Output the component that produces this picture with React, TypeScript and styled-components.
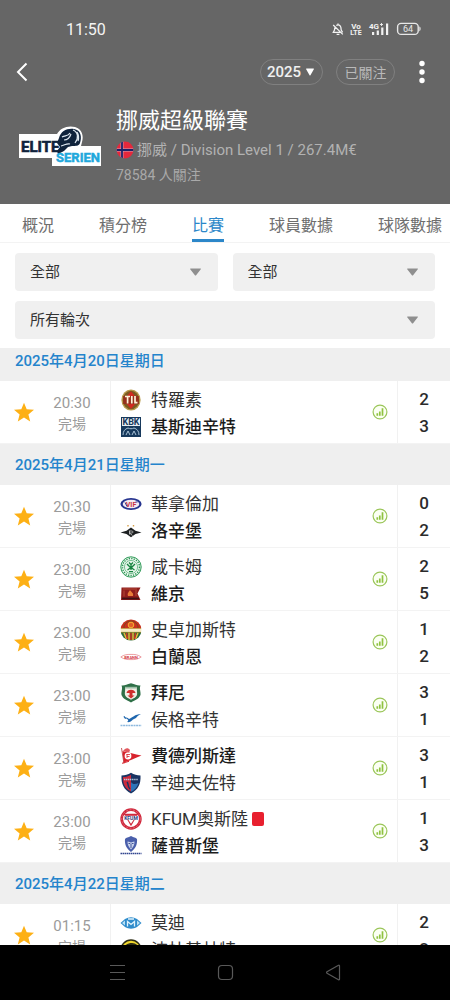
import React, { useState } from "react";
import styled, { createGlobalStyle, css } from "styled-components";

const GlobalStyle = createGlobalStyle`
  *, *::before, *::after { box-sizing: border-box; }
  body {
    margin: 0;
    background: #fff;
    color: #222;
    font-family: Roboto, "Noto Sans CJK TC", sans-serif;
  }
  button, select { font: inherit; color: inherit; }
`;

const Screen = styled.div`
  display: flex;
  flex-direction: column;
  height: 100vh;
  overflow: hidden;
`;

/* ---------- header ---------- */

const Header = styled.header`
  flex: none;
  background: #666;
  color: #fff;
  padding-bottom: 17px;
`;

const StatusBar = styled.div`
  display: flex;
  align-items: center;
  justify-content: space-between;
  height: 58px;
  padding: 0 28px 0 66px;
  font-size: 16px;
  color: #f4f4f4;
`;

const StatusIcons = styled.div`
  display: flex;
  align-items: center;
  gap: 6px;
`;

const Toolbar = styled.div`
  display: flex;
  align-items: center;
  height: 28px;
  padding-right: 6px;
`;

const IconButton = styled.button`
  display: grid;
  place-items: center;
  width: 44px;
  height: 28px;
  padding: 0;
  border: 0;
  background: none;
  color: #fff;
  cursor: pointer;
`;

const Spacer = styled.div`
  flex: 1;
`;

const pill = css`
  height: 26px;
  border: 1px solid #808080;
  border-radius: 13px;
  background: none;
  font-size: 14px;
`;

const Overlay = styled.div`
  display: grid;
  align-items: center;

  > * { grid-area: 1 / 1; }
  > svg { justify-self: end; pointer-events: none; }
`;

const SeasonPicker = styled(Overlay)`
  margin-right: 13px;
  > svg { margin-right: 9px; }
`;

const SeasonSelect = styled.select`
  ${pill}
  appearance: none;
  width: 63px;
  padding: 0 0 0 6px;
  font-size: 15px;
  font-weight: 500;
  color: #f0f0f0;

  option { color: #222; }
`;

const FollowButton = styled.button`
  ${pill}
  width: 59px;
  margin-right: 5px;
  padding: 0;
  color: #b9b9b9;
`;

const League = styled.div`
  display: flex;
  align-items: center;
  gap: 14px;
  padding: 19px 16px 0 18px;
`;

const LeagueTitle = styled.h1`
  margin: 0;
  font-size: 22px;
  font-weight: 400;
  line-height: 32px;
`;

const LeagueMeta = styled.p`
  display: flex;
  align-items: center;
  gap: 3px;
  margin: 0;
  font-size: 15px;
  line-height: 26px;
  color: #b2b2b2;
`;

const Followers = styled.p`
  margin: 0;
  font-size: 14px;
  line-height: 24px;
  color: #a9a9a9;
`;

/* ---------- tabs and filters ---------- */

const Tabs = styled.nav`
  flex: none;
  display: flex;
  gap: 45px;
  height: 39px;
  padding-left: 22px;
  border-bottom: 1px solid #f3f3f3;
  overflow: hidden;
`;

const Tab = styled.button<{ $active: boolean }>`
  flex: none;
  padding: 4px 0 0;
  border: 0;
  border-bottom: 3px solid ${(p) => (p.$active ? "#2c87c9" : "transparent")};
  background: none;
  font-size: 16px;
  color: ${(p) => (p.$active ? "#2c87c9" : "#6e6e6e")};
  white-space: nowrap;
  cursor: pointer;
`;

const Filters = styled.section`
  flex: none;
  position: relative;
  z-index: 1;
  display: grid;
  grid-template-columns: 1fr 1fr;
  gap: 10px 15px;
  padding: 10px 15px 9px;
  background: #fff;
`;

const FilterBox = styled(Overlay)<{ $wide?: boolean }>`
  ${(p) => p.$wide && "grid-column: 1 / -1;"}
  > svg { margin-right: 17px; }
`;

const FilterSelect = styled.select`
  appearance: none;
  width: 100%;
  height: 38px;
  padding: 0 36px 0 15px;
  border: 0;
  border-radius: 4px;
  background: #f0f0f0;
  font-size: 15px;
  color: #333;
`;

/* ---------- matches ---------- */

const MatchList = styled.main`
  flex: 1;
  min-height: 0;
  margin-top: -8px;
  overflow: hidden;
`;

const DayTitle = styled.h2`
  margin: 0;
  padding: 2px 0 0 15px;
  background: #efefef;
  font-size: 15px;
  font-weight: 500;
  line-height: 39px;
  color: #2484cc;
`;

const MatchRow = styled.article`
  display: flex;
  align-items: stretch;
  height: 63px;
  border-bottom: 1px solid #f3f3f3;
`;

const StarButton = styled.button`
  flex: none;
  width: 48px;
  padding: 0;
  border: 0;
  background: none;
  cursor: pointer;

  svg { display: block; margin: 0 auto; }
`;

const Kickoff = styled.div`
  flex: none;
  width: 62px;
  padding: 12px 14px 0 0;
  font-size: 15px;
  line-height: 21px;
  text-align: center;
  color: #9b9b9b;
`;

const State = styled.div`
  font-size: 14px;
`;

const Teams = styled.div`
  flex: 1;
  min-width: 0;
  padding: 5px 0 0 9px;
  border-left: 1px solid #f1f1f1;
`;

const Team = styled.div<{ $winner?: boolean }>`
  display: flex;
  align-items: center;
  height: 27px;
  font-size: 17px;
  line-height: 28px;
  font-weight: ${(p) => (p.$winner ? 500 : 400)};
  color: ${(p) => (p.$winner ? "#1c1c1c" : "#333")};
  white-space: nowrap;

  svg { flex: none; margin-right: 9px; }
`;

const RedCard = styled.span`
  width: 12px;
  height: 14px;
  margin-left: 4px;
  border-radius: 2px;
  background: #e8202f;
`;

const StatsButton = styled.button`
  flex: none;
  width: 34px;
  padding: 0;
  border: 0;
  background: none;
  cursor: pointer;

  svg { display: block; margin: 0 auto; }
`;

const Scores = styled.div`
  flex: none;
  width: 53px;
  padding-top: 5px;
  border-left: 1px solid #f1f1f1;
  font-size: 17px;
  font-weight: 500;
  line-height: 27px;
  text-align: center;
  color: #2b2b2b;
`;

/* ---------- system navigation ---------- */

const SystemBar = styled.footer`
  flex: none;
  display: flex;
  justify-content: center;
  gap: 64px;
  height: 55px;
  background: #000;
  color: #595959;
`;

const SystemButton = styled(IconButton)`
  height: 55px;
  color: inherit;
`;

/* ---------- drawings ---------- */

const Triangle = ({ size = 11, color = "#8f8f8f" }) => (
  <svg width={size} height="8" viewBox="0 0 11 8" preserveAspectRatio="none" aria-hidden="true">
    <path d="M0.6 0.6h9.8c.5 0 .6.4.4.7L6.1 7.2c-.3.4-.9.4-1.2 0L.2 1.3C0 1 .1.6.6.6z" fill={color} />
  </svg>
);

const Star = () => (
  <svg width="22" height="21" viewBox="0 0 22 21" aria-hidden="true">
    <path d="M11 .7l2.700 6.600 7.300.5-5.600 4.600 1.800 7L11 15.500l-6.200 3.900 1.800-7L1 7.800l7.300-.5z" fill="#fdb015" />
  </svg>
);

const StatsIcon = () => (
  <svg width="16" height="16" viewBox="0 0 16 16" aria-hidden="true">
    <circle cx="8" cy="8" r="6.900" fill="#fbfff3" stroke="#9bc65a" strokeWidth="1.200" />
    <path d="M5.300 9.300v2.500M7.800 7.500v4.300M10.500 4.300v7.500" stroke="#8fc240" strokeWidth="1.700" />
  </svg>
);

const BellOff = () => (
  <svg width="12" height="14" viewBox="0 0 12 14" fill="none" stroke="#f2f2f2" strokeWidth="1.300" aria-hidden="true">
    <path d="M3.200 4.800C2.700 5.700 2.700 6.500 2.500 8L1.300 10.300h7.500M4.300 3.500C6.300 2 8.600 3.300 8.900 5.500l.3 2.500 1.400 2.300M6 1.500v1.300M4.600 12.300h2.800M1.200 3l9.600 9.400" />
  </svg>
);

const VoLte = () => (
  <svg width="12" height="14" viewBox="0 0 12 14" fill="#f2f2f2" fontFamily="Roboto, sans-serif" fontWeight="700" textAnchor="middle" aria-hidden="true">
    <text x="6" y="6.500" fontSize="8">Vo</text>
    <text x="6" y="13" fontSize="7">LTE</text>
  </svg>
);

const Signal = () => (
  <svg width="22" height="14" viewBox="0 0 22 14" fill="#f2f2f2" aria-hidden="true">
    <text x="1" y="7" fontSize="8" fontWeight="700" fontFamily="Roboto, sans-serif">4G</text>
    <path d="M12 2.500h3M13.500 1v3" stroke="#f2f2f2" strokeWidth=".9" />
    <path d="M4 10h2.200v3H4zM8.700 8.500h2.200V13H8.700zM13.200 5.500h2.200V13h-2.200zM18 1.500h2.200V13H18z" />
  </svg>
);

const Battery = () => (
  <svg width="26" height="14" viewBox="0 0 26 14" aria-hidden="true">
    <rect x="1.600" y="1.400" width="20.600" height="11" rx="3.500" fill="none" stroke="#e8e8e8" strokeWidth="1.400" />
    <path d="M23.400 4.600c1.600.4 1.600 4.200 0 4.600z" fill="#f2f2f2" />
    <text x="12" y="10" fontSize="9" fill="#e8e8e8" textAnchor="middle" fontFamily="Roboto, sans-serif">64</text>
  </svg>
);

const Flag = () => (
  <svg width="18" height="18" viewBox="0 0 18 18" aria-hidden="true">
    <clipPath id="flag"><circle cx="9" cy="9" r="8.400" /></clipPath>
    <g clipPath="url(#flag)">
      <path d="M0 0h18v18H0z" fill="#e5283c" />
      <path d="M0 9h18M6 0v18" stroke="#c9a9bd" strokeWidth="2.800" />
      <path d="M0 9h18M6 0v18" stroke="#1c2168" strokeWidth="1.800" />
    </g>
  </svg>
);

const LeagueLogo = () => (
  <svg width="84" height="42" viewBox="0 0 84 42" role="img" aria-label="Eliteserien">
    <path d="M1 9h38C42 3 50 0 57 2c7 2 9 9 7 15l-1 4h20v20H34v-8H1z" fill="#fff" />
    <path d="M41 13c2-7 8-10 15-9 7 1 8 8 6 14-1 3-4 3-8 3l-4 1-4 4-6 3-1-3 3-4-3-4z" fill="#10233c" />
    <path d="M44 12c3-2 6 0 8-4M46 15c4 0 6-3 7-6M55 5c5 2 6 8 2 13M43 21c4-1 6-3 9-2M59 7c2 3 2 6 1 9" fill="none" stroke="#dfe8f0" strokeWidth="1.200" />
    <g fontFamily="Roboto, sans-serif" fontWeight="700">
      <text x="3" y="27" fontSize="15" fill="#10233c" stroke="#10233c" strokeWidth=".6">ELITE</text>
      <text x="38" y="37" fontSize="13" fill="#21a8dc" stroke="#21a8dc" strokeWidth=".5">SERIEN</text>
    </g>
  </svg>
);

type BadgeId =
  | "til" | "kbk" | "vif" | "rbk" | "ham" | "vik" | "sif" | "brann"
  | "bryne" | "fkh" | "ffk" | "ss" | "kfum" | "s08" | "molde" | "bodo";

const badgeArt: Record<BadgeId, React.ReactNode> = {
  til: (
    <>
      <ellipse cx="11" cy="11" rx="9.600" ry="10.600" fill="#b79a4a" />
      <ellipse cx="11" cy="11" rx="8.200" ry="9.200" fill="#7c5a22" />
      <path d="M11 2.200l5 6H6zM11 20l-5-6h10z" fill="#d12a20" />
      <rect x="3.200" y="7" width="15.600" height="8" fill="#96301c" />
      <path d="M5 7.500h5M7.600 7.500v7M11.800 7v7.500M15 7v6.700h2.500" stroke="#fff3d8" strokeWidth="1.700" fill="none" />
    </>
  ),
  kbk: (
    <>
      <path d="M1 1h20v20H1z" fill="#17395c" />
      <path d="M2 2h18v8H2z" fill="#e6edf3" />
      <text x="11" y="9" fontSize="9" fontWeight="700" textAnchor="middle" fill="#17395c" fontFamily="Roboto, sans-serif">KBK</text>
      <path d="M3 19c0-4 2-6 5-7 2 1 4 1 6 0 3 1 5 3 5 7M6 19l2-4 2 4M12 19l2-4 2 4" fill="none" stroke="#a9c2d6" strokeWidth="1" />
    </>
  ),
  vif: (
    <>
      <ellipse cx="11" cy="11" rx="10.600" ry="6" fill="#26348f" />
      <ellipse cx="11" cy="11" rx="8.300" ry="4.300" fill="#f3ebf2" />
      <text x="11" y="13.600" fontSize="7" fontWeight="700" textAnchor="middle" fill="#c9323f" fontFamily="Roboto, sans-serif">VIF</text>
      <path d="M5 9.500l2 4M15.500 9h2" stroke="#33409a" />
    </>
  ),
  rbk: (
    <>
      <path d="M.5 12.500l6-1.700 4.500-3.300 4.500 3.300 6 1.700-6 1.500-4.500 3.300L6.500 14z" fill="#1c1f20" />
      <path d="M9 11h2.500c2 0 2 2 0 2H9.500l3 2.500M9.500 11v3.500" stroke="#cfcfcf" strokeWidth=".8" fill="none" />
      <path d="M8 6.500V5M13.500 6.500V5" stroke="#d6a04a" strokeWidth="1.400" />
    </>
  ),
  ham: (
    <>
      <circle cx="11" cy="11" r="10.200" fill="#eef8f0" stroke="#2f9a58" strokeWidth="1" />
      <circle cx="11" cy="11" r="8.500" fill="none" stroke="#2f9a58" strokeWidth="1.500" strokeDasharray="1.300 1.200" />
      <circle cx="11" cy="11" r="6.600" fill="#e6f5ea" stroke="#2f9a58" strokeWidth=".6" />
      <path d="M11 8v6M7 8l4 4 4-4M7.500 14l3.500-2.500 3.500 2.500M9 6.500l2 2 2-2M9 15.700h4" fill="none" stroke="#16843f" strokeWidth="1.300" />
    </>
  ),
  vik: (
    <>
      <path d="M1.500 4.500h19l-3 6 3 6.500H1z" fill="#8f1d1c" />
      <path d="M2 15.500h17" stroke="#3f1114" strokeWidth="1.800" />
      <path d="M3 6h14M4 7.500v6M16 7v6" stroke="#b34a36" />
      <path d="M8 13c-1-3 1-4 2-6 1 2 4 3 3 6z" fill="#ea7d3a" />
    </>
  ),
  sif: (
    <>
      <clipPath id="sif"><circle cx="11" cy="11" r="10.500" /></clipPath>
      <g clipPath="url(#sif)">
        <path d="M0 0h22v9.500H0z" fill="#c8321f" />
        <path d="M0 9.500h22v3.800H0z" fill="#f6ecc4" />
        <path d="M0 13h22v9H0z" fill="#2c6b3c" />
        <path d="M4 9c0-4 3-7 7-7s7 3 7 7" fill="none" stroke="#7c4a1e" strokeWidth="1" />
        <circle cx="11" cy="6" r="2.800" fill="#e2602a" stroke="#f3b530" strokeWidth="1" />
        <path d="M4 14l2.500 6M9 13.500v8M13 13.500v8M18 14l-2.500 6" stroke="#e7b938" strokeWidth="1.500" />
        <path d="M6.500 14l1 6M11 14v7M15.500 14l-1 6" stroke="#cf3020" strokeWidth="1.500" />
      </g>
      <path d="M1 9.500h20M1 13.300h20" stroke="#b98f2c" strokeWidth=".7" />
    </>
  ),
  brann: (
    <>
      <path d="M.8 11C4 8.600 7 8.400 11 8.400s7 .2 10.200 2.600C18 13.400 15 13.600 11 13.600S4 13.400.8 11z" fill="#fff" stroke="#e7858a" strokeWidth=".8" />
      <text x="11" y="12.600" fontSize="4" fontWeight="700" textAnchor="middle" fill="#d2353d" fontFamily="Roboto, sans-serif">BRANN</text>
    </>
  ),
  bryne: (
    <>
      <path d="M1.500 3.500c3 .5 5-1 9.500-2.200 4.500 1.200 6.500 2.700 9.500 2.200-1.500 3 .5 6 0 9.500-1.500 4-5 5-9.500 7.500C6.500 18 3 17 1.500 13c-.5-3.500 1.500-6.500 0-9.500z" fill="#2f7048" />
      <path d="M5 5.500h12c-.6 3 .6 5 0 7.500-1 2.500-3 3-6 4.700-3-1.700-5-2.200-6-4.700-.6-2.500.6-4.500 0-7.500z" fill="#f2efe6" />
      <path d="M5 4.800h12v1.700H5z" fill="#9dbfa8" />
      <path d="M6.500 11c.5-4.500 8.500-4.500 9 0zM9.500 11h3v2.500h-3zM7.500 13.500h7L11 16.500z" fill="#cf2f2c" />
    </>
  ),
  fkh: (
    <>
      <path d="M3.500 8.500c2-.8 4 0 5.500 1.500 3-1 6-5 12-5-3 1.300-4 2.500-5 4l-3 1.500c-1.500 2-4 3-6 2.500 1-1 1.500-1.500 1-2.300C7 9.500 5 9 3.500 8.500z" fill="#1e66ae" />
      <path d="M4 7l1.500 3" stroke="#1e66ae" />
      <path d="M.5 16.500h21" stroke="#8db9de" strokeWidth="1.300" strokeDasharray="2 .6" />
    </>
  ),
  ffk: (
    <>
      <path d="M2.500 6c6 1.500 12 3 19 4.500C15 13 9 16 3.500 17.500z" fill="#d8232d" />
      <path d="M1.500 3L4 18.500" stroke="#c4474c" strokeWidth=".9" />
      <path d="M3 6c2-3 5-4 7-1l-1 3z" fill="#e2585e" />
      <circle cx="8" cy="11" r="3.400" fill="#fff" />
      <path d="M6.500 9.500h3.500M7 11.500h2.500M7 9v4" stroke="#d8232d" strokeWidth=".8" />
      <path d="M2 18.300l7-2" stroke="#d8232d" />
    </>
  ),
  ss: (
    <>
      <path d="M1.500 3.500C5 3.500 8 2.500 11 .8c3 1.700 6 2.700 9.500 2.700C21 12 18 18 11 21.400 4 18 1 12 1.500 3.500z" fill="#1a3463" />
      <path d="M3 5c3 0 5.500-.8 8-2.300V19.500C5 16.500 2.800 12 3 5z" fill="#cc2a3c" />
      <path d="M11 10c2 3 5 2 7.500 1-1.200 4-3.500 7-7.500 8.800z" fill="#2f74b8" />
      <path d="M4 7.500h14" stroke="#b9c6dd" strokeWidth="1.500" strokeDasharray="1.300 .6" />
      <path d="M7 10c2 2 0 4 3 7" stroke="#1a3463" fill="none" strokeWidth="1.500" />
    </>
  ),
  kfum: (
    <>
      <circle cx="11" cy="11" r="9.300" fill="#fff" stroke="#d0283c" strokeWidth="2.800" />
      <circle cx="11" cy="11" r="9.300" fill="none" stroke="#e88f99" strokeWidth=".6" strokeDasharray="2 1.500" />
      <path d="M3.800 5.800h14.400L11 18.300z" fill="#d0283c" />
      <path d="M8.500 12h5L11 15.800z" fill="#fff" />
      <path d="M3.500 7.800h15v4h-15z" fill="#fff" />
      <text x="11" y="11.600" fontSize="5" fontWeight="700" textAnchor="middle" fill="#29407f" fontFamily="Roboto, sans-serif">KFUM</text>
    </>
  ),
  s08: (
    <>
      <path d="M5 4c1.500-2 3-1 6-3 3 2 4.500 1 6 3 .5 5-1 9-6 13C6 13 4.500 9 5 4z" fill="#4a5fab" />
      <path d="M7.500 6.500c2 0 2.500 1 3.500 1s1.500-1 3.500-1c0 3-1 5.500-3.500 8-2.500-2.500-3.500-5-3.500-8z" fill="#c9d3ec" />
      <path d="M8.500 8.500h1.800M11.700 8.500h1.800M10 12h2M11 9v2" stroke="#31458f" strokeWidth=".9" />
      <path d="M.5 18.500h21" stroke="#31458f" strokeWidth="1.600" strokeDasharray="1.500 .5" />
    </>
  ),
  molde: (
    <>
      <path d="M.5 11L5 7c4-2.200 8-2.200 12 0l4.500 4-4.500 4c-4 2.200-8 2.200-12 0z" fill="#2f8ccc" />
      <path d="M2 11l3-2.500v5zM20 11l-3-2.500v5z" fill="#b9e0f5" />
      <path d="M7.500 14.500V9.500l3.500 3 3.500-3v5M8 7h6" stroke="#dff2fc" strokeWidth="1.300" fill="none" />
    </>
  ),
  bodo: (
    <>
      <circle cx="11" cy="11" r="10" fill="#f0d72e" stroke="#2c2b14" strokeWidth="1.500" />
      <path d="M4 8c2-3 5-4 8-4 4 0 7 3 8 6l-2 4c-1-4-4-7-7-6s-5-1-7 0z" fill="#2c2b14" />
      <path d="M6 12c2-2 5-3 9-1l3 4" stroke="#2c2b14" strokeWidth="2" fill="none" />
    </>
  ),
};

const Badge = ({ id }: { id: BadgeId }) => (
  <svg width="22" height="22" viewBox="0 0 22 22" aria-hidden="true">{badgeArt[id]}</svg>
);

/* ---------- data ---------- */

interface Side { name: string; badge: BadgeId; goals: number; redCard?: boolean }
interface Match { time: string; home: Side; away: Side }

const side = (name: string, badge: BadgeId, goals: number, redCard = false): Side => ({ name, badge, goals, redCard });

const days: { date: string; matches: Match[] }[] = [
  {
    date: "2025年4月20日星期日",
    matches: [{ time: "20:30", home: side("特羅素", "til", 2), away: side("基斯迪辛特", "kbk", 3) }],
  },
  {
    date: "2025年4月21日星期一",
    matches: [
      { time: "20:30", home: side("華拿倫加", "vif", 0), away: side("洛辛堡", "rbk", 2) },
      { time: "23:00", home: side("咸卡姆", "ham", 2), away: side("維京", "vik", 5) },
      { time: "23:00", home: side("史卓加斯特", "sif", 1), away: side("白蘭恩", "brann", 2) },
      { time: "23:00", home: side("拜尼", "bryne", 3), away: side("侯格辛特", "fkh", 1) },
      { time: "23:00", home: side("費德列斯達", "ffk", 3), away: side("辛迪夫佐特", "ss", 1) },
      { time: "23:00", home: side("KFUM奧斯陸", "kfum", 1, true), away: side("薩普斯堡", "s08", 3) },
    ],
  },
  {
    date: "2025年4月22日星期二",
    matches: [{ time: "01:15", home: side("莫迪", "molde", 2), away: side("波杜基林特", "bodo", 2) }],
  },
];

const tabs = ["概況", "積分榜", "比賽", "球員數據", "球隊數據"];

const TeamLine = ({ team, winner }: { team: Side; winner: boolean }) => (
  <Team $winner={winner}>
    <Badge id={team.badge} />
    {team.name}
    {team.redCard && <RedCard role="img" aria-label="紅牌" />}
  </Team>
);

const MatchItem = ({ match: { time, home, away } }: { match: Match }) => (
  <MatchRow>
    <StarButton aria-label="收藏"><Star /></StarButton>
    <Kickoff>
      <time>{time}</time>
      <State>完場</State>
    </Kickoff>
    <Teams>
      <TeamLine team={home} winner={home.goals > away.goals} />
      <TeamLine team={away} winner={away.goals > home.goals} />
    </Teams>
    <StatsButton aria-label="統計"><StatsIcon /></StatsButton>
    <Scores>
      <div>{home.goals}</div>
      <div>{away.goals}</div>
    </Scores>
  </MatchRow>
);

const Filter = ({ label, option, wide }: { label: string; option: string; wide?: boolean }) => (
  <FilterBox $wide={wide}>
    <FilterSelect aria-label={label}>
      <option>{option}</option>
    </FilterSelect>
    <Triangle />
  </FilterBox>
);

export default function App() {
  const [active, setActive] = useState("比賽");

  return (
    <Screen>
      <GlobalStyle />
      <Header>
        <StatusBar>
          <span>11:50</span>
          <StatusIcons>
            <BellOff />
            <VoLte />
            <Signal />
            <Battery />
          </StatusIcons>
        </StatusBar>
        <Toolbar>
          <IconButton aria-label="返回">
            <svg width="12" height="20" viewBox="0 0 12 20" fill="none" stroke="#fff" strokeWidth="2">
              <path d="M10.500 1.500L2 10l8.500 8.500" />
            </svg>
          </IconButton>
          <Spacer />
          <SeasonPicker>
            <SeasonSelect aria-label="賽季">
              <option>2025</option>
            </SeasonSelect>
            <Triangle size={8} color="#fff" />
          </SeasonPicker>
          <FollowButton>已關注</FollowButton>
          <IconButton aria-label="更多">
            <svg width="6" height="24" viewBox="0 0 6 24" fill="#fff">
              <circle cx="3" cy="3.500" r="2.700" />
              <circle cx="3" cy="12" r="2.700" />
              <circle cx="3" cy="20.500" r="2.700" />
            </svg>
          </IconButton>
        </Toolbar>
        <League>
          <LeagueLogo />
          <div>
            <LeagueTitle>挪威超級聯賽</LeagueTitle>
            <LeagueMeta>
              <Flag />
              挪威 / Division Level 1 / 267.4M€
            </LeagueMeta>
            <Followers>78584 人關注</Followers>
          </div>
        </League>
      </Header>

      <Tabs>
        {tabs.map((name) => (
          <Tab key={name} $active={name === active} onClick={() => setActive(name)}>
            {name}
          </Tab>
        ))}
      </Tabs>

      <Filters>
        <Filter label="球隊" option="全部" />
        <Filter label="狀態" option="全部" />
        <Filter label="輪次" option="所有輪次" wide />
      </Filters>

      <MatchList>
        {days.map((day) => (
          <section key={day.date}>
            <DayTitle>{day.date}</DayTitle>
            {day.matches.map((match) => (
              <MatchItem key={match.home.name} match={match} />
            ))}
          </section>
        ))}
      </MatchList>

      <SystemBar>
        <SystemButton aria-label="最近使用">
          <svg width="17" height="17" viewBox="0 0 17 17" stroke="currentColor" strokeWidth="1.200">
            <path d="M1 1.500h15M1 8.500h15M1 15.500h15" />
          </svg>
        </SystemButton>
        <SystemButton aria-label="主畫面">
          <svg width="17" height="17" viewBox="0 0 17 17" fill="none" stroke="currentColor" strokeWidth="1.200">
            <rect x="1.500" y="1.500" width="14" height="14" rx="3.500" />
          </svg>
        </SystemButton>
        <SystemButton aria-label="上一頁">
          <svg width="17" height="17" viewBox="0 0 17 17" fill="none" stroke="currentColor" strokeWidth="1.200">
            <path d="M14.500 1.800v13.400c0 .6-.5.8-1 .5L2 9.200c-.6-.3-.6-1 0-1.400l11.500-6.500c.5-.3 1-.1 1 .5z" />
          </svg>
        </SystemButton>
      </SystemBar>
    </Screen>
  );
}
